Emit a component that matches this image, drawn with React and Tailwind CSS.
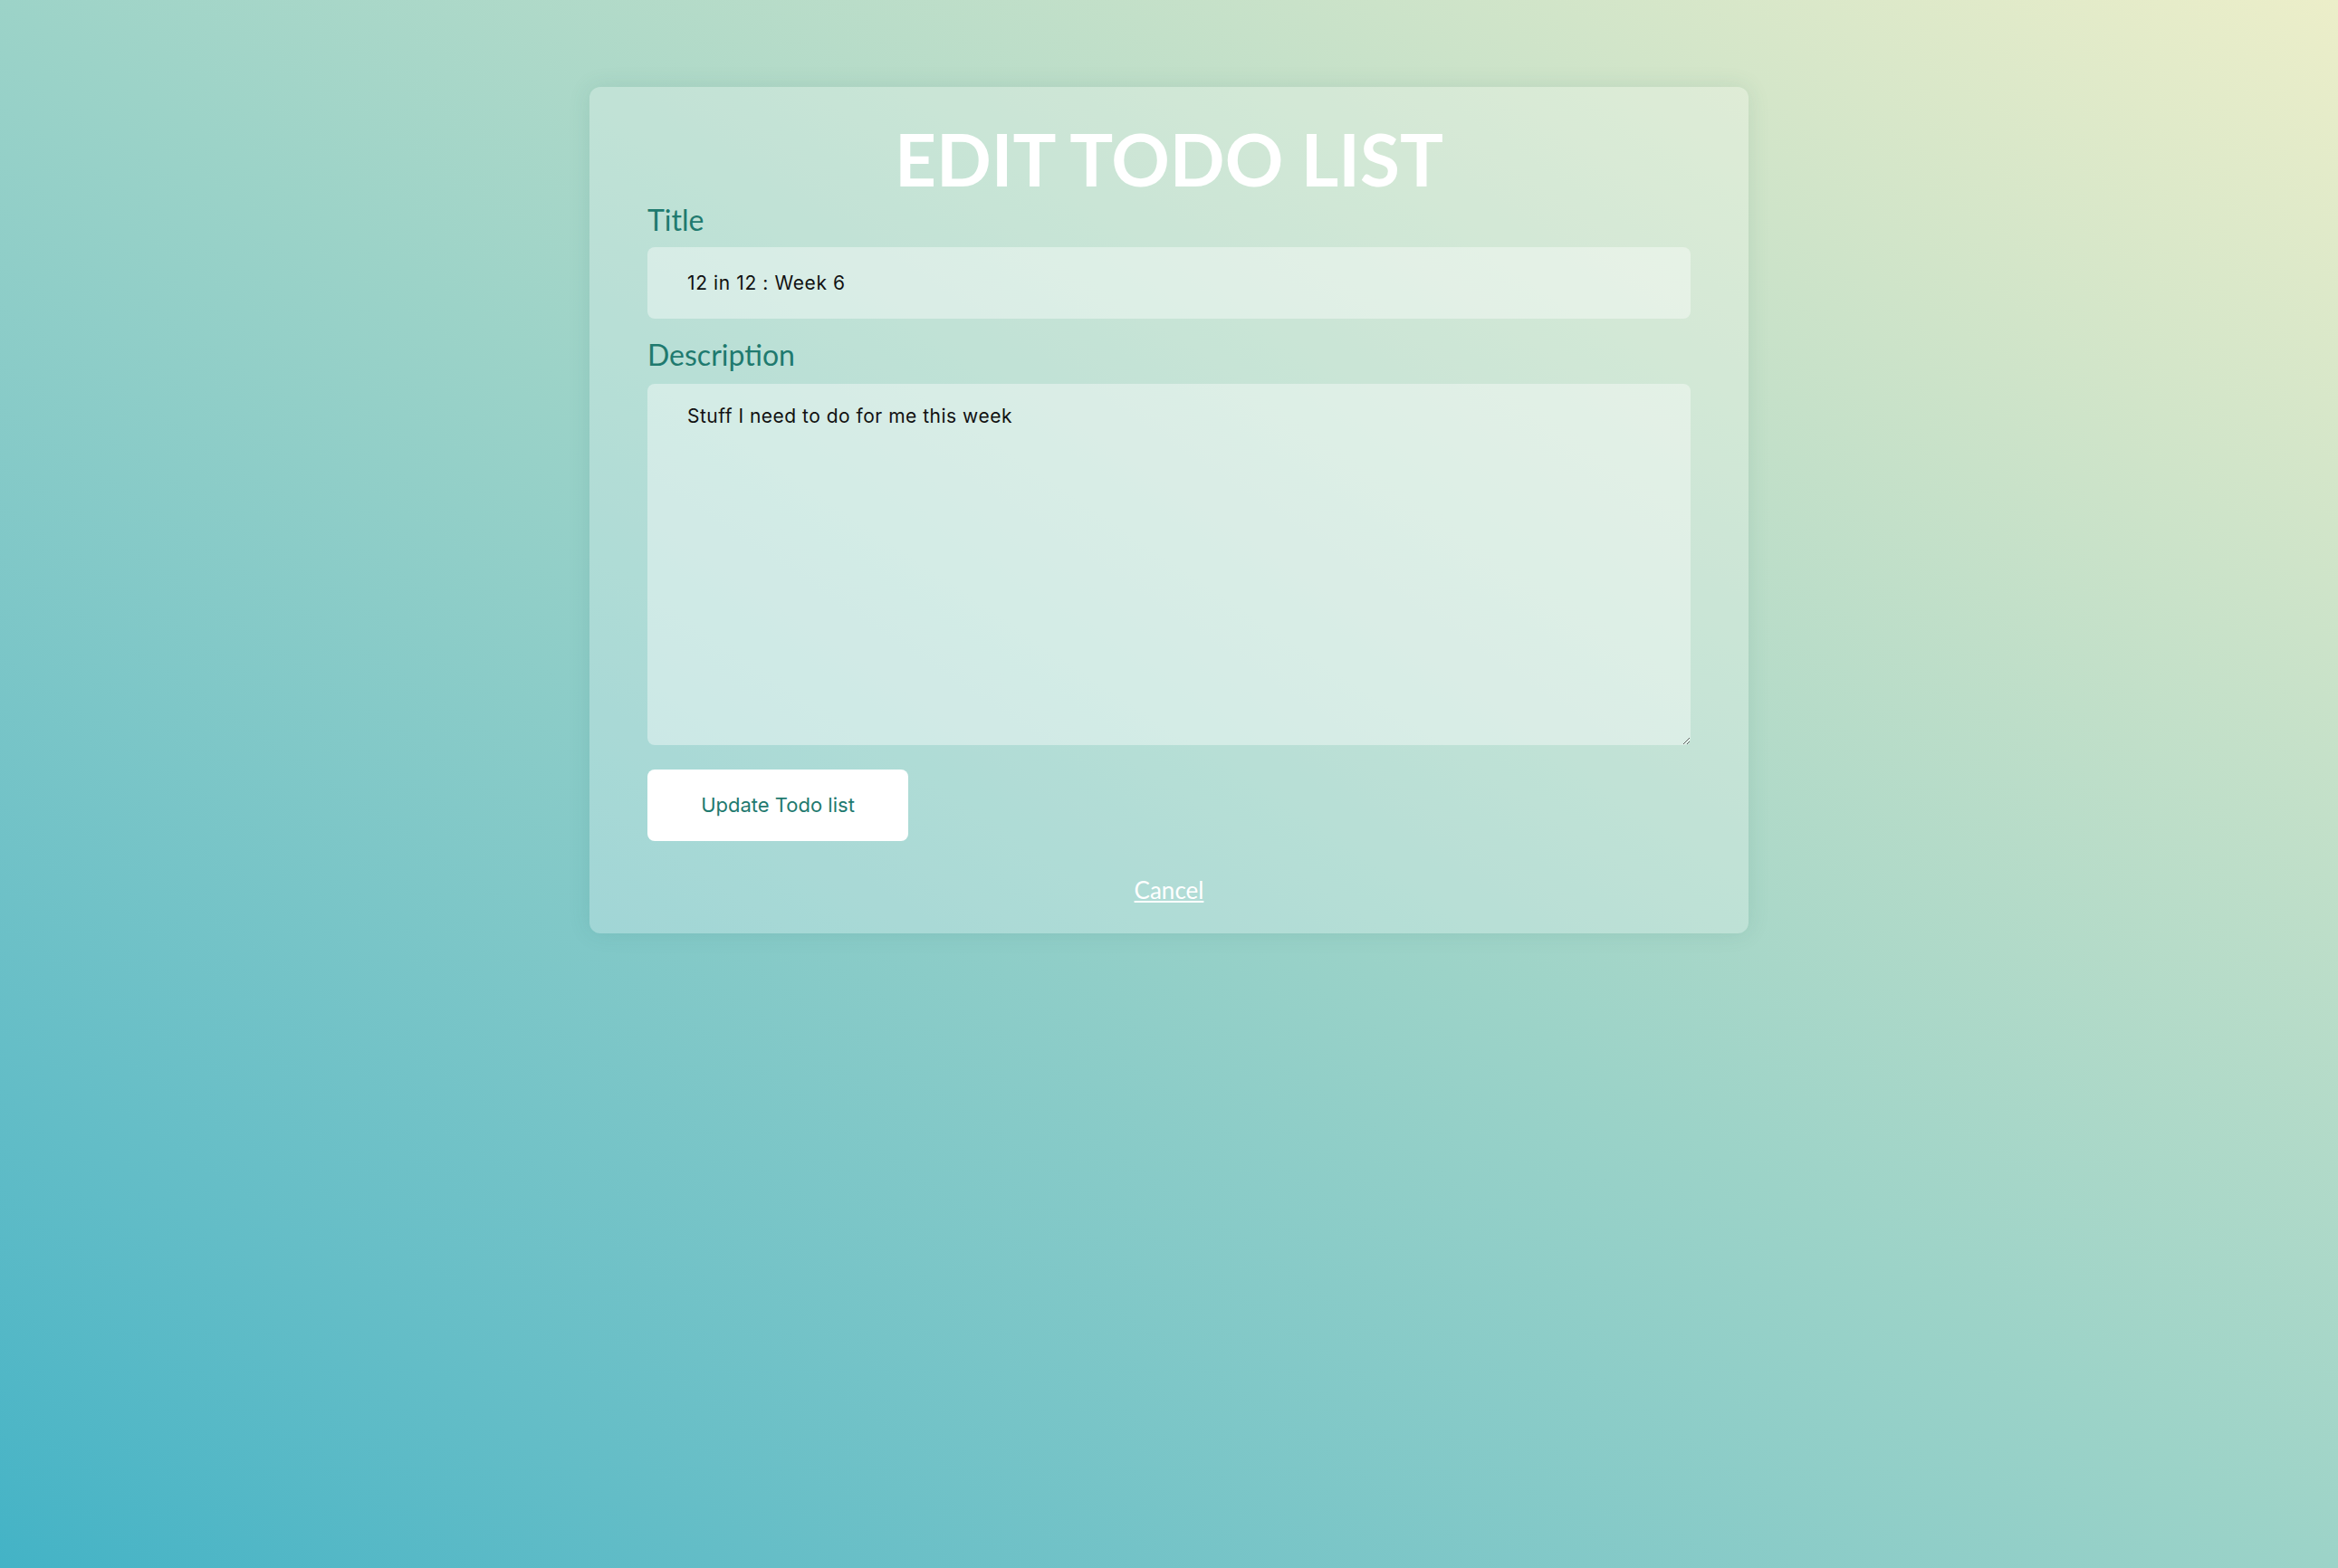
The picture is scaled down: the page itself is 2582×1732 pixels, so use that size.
import React from "react";

export default function App() {
  return (
    <div className="min-h-screen w-full bg-linear-to-tr from-[#43b3c6] via-[#9cd3c8] to-[#eceec9] pt-[96px]">
      <div className="mx-auto w-[1280px] rounded-xl bg-white/25 px-[64px] pt-[31px] pb-[32px] shadow-[0_0_24px_rgba(40,110,100,0.12)] font-['Lato',sans-serif]">
        <h1 className="text-center text-[80px] font-bold leading-[1.2] text-white">
          EDIT TODO LIST
        </h1>
        <label className="mt-[1px] block text-[32px] leading-[1.2] text-[#1f7a6f]">Title</label>
        <input
          type="text"
          defaultValue="12 in 12 : Week 6"
          className="mt-[11px] block h-[79px] w-full rounded-lg bg-white/40 pl-[44px] pr-4 font-['Inter',sans-serif] text-[21px] tracking-[0.6px] text-[#111] outline-none"
        />
        <label className="mt-[21px] block text-[32px] leading-[1.2] text-[#1f7a6f]">Description</label>
        <textarea
          defaultValue="Stuff I need to do for me this week"
          className="mt-[12px] block h-[399px] w-full resize rounded-lg bg-white/40 px-[44px] pt-[20px] font-['Inter',sans-serif] text-[21px] leading-[1.5] tracking-[0.5px] text-[#111] outline-none"
        />
        <button
          type="button"
          className="mt-[27px] block h-[79px] w-[288px] rounded-lg bg-white font-['Inter',sans-serif] text-[22px] text-[#1f7a6f]"
        >
          Update Todo list
        </button>
        <div className="mt-[39px] text-center">
          <a href="#" className="text-[26px] leading-[1.2] text-white underline">
            Cancel
          </a>
        </div>
      </div>
    </div>
  );
}
